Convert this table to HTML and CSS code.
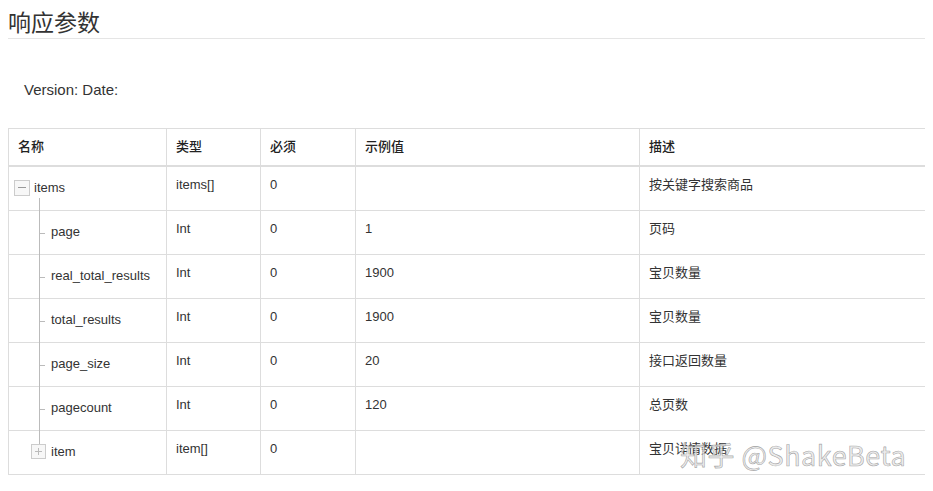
FILE: index.html
```html
<!DOCTYPE html>
<html lang="zh-CN">
<head>
<meta charset="utf-8">
<title>响应参数</title>
<link rel="stylesheet" href="styles.css">
</head>
<body>
<h2 class="title">响应参数</h2>
<p class="version">Version: Date:</p>
<table class="params">
  <colgroup>
    <col class="c-name"><col class="c-type"><col class="c-req"><col class="c-ex"><col class="c-desc">
  </colgroup>
  <thead>
    <tr><th>名称</th><th>类型</th><th>必须</th><th>示例值</th><th>描述</th></tr>
  </thead>
  <tbody>
    <tr>
      <td class="name root"><span class="toggle minus"></span>items</td>
      <td>items[]</td><td>0</td><td></td><td>按关键字搜索商品</td>
    </tr>
    <tr><td class="name child">page</td><td>Int</td><td>0</td><td>1</td><td>页码</td></tr>
    <tr><td class="name child">real_total_results</td><td>Int</td><td>0</td><td>1900</td><td>宝贝数量</td></tr>
    <tr><td class="name child">total_results</td><td>Int</td><td>0</td><td>1900</td><td>宝贝数量</td></tr>
    <tr><td class="name child">page_size</td><td>Int</td><td>0</td><td>20</td><td>接口返回数量</td></tr>
    <tr><td class="name child">pagecount</td><td>Int</td><td>0</td><td>120</td><td>总页数</td></tr>
    <tr>
      <td class="name child last"><span class="toggle plus"></span>item</td>
      <td>item[]</td><td>0</td><td></td><td>宝贝详情数据</td>
    </tr>
  </tbody>
</table>
<div class="watermark">知乎 @ShakeBeta</div>
</body>
</html>
```
FILE: styles.css
```css
html, body {
  background: #fff;
}
body {
  margin: 8px;
  font-family: "Liberation Sans", Arial, "Noto Sans CJK SC", sans-serif;
  color: #333;
  position: relative;
}
.title {
  margin: 0;
  font-size: 23px;
  font-weight: normal;
  line-height: 27px;
  padding-bottom: 3px;
  border-bottom: 1px solid #e5e5e5;
  color: #333;
  font-family: "Noto Sans CJK SC", sans-serif;
}
.version {
  margin: 41px 0 28px;
  padding-left: 16px;
  font-size: 15px;
  line-height: 20px;
  color: #333;
}
.params {
  width: 100%;
  table-layout: fixed;
  border-collapse: collapse;
  border: 1px solid #ddd;
  font-size: 13px;
  line-height: 20px;
}
.c-name { width: 158px; }
.c-type { width: 94px; }
.c-req { width: 95px; }
.c-ex { width: 284px; }
.c-desc { width: 286px; }
.params th, .params td {
  border: 1px solid #ddd;
  padding: 8px 9px;
  text-align: left;
  vertical-align: top;
  font-family: "Liberation Sans", Arial, "Noto Sans CJK SC", sans-serif;
}
.params th {
  height: 20px;
  padding: 8px 9px 8px;
  font-weight: 500;
  color: #222;
  vertical-align: middle;
  border-bottom: 2px solid #ddd;
}
.params tbody tr {
  height: 44px;
}
.params td {
  padding-top: 8px;
  color: #333;
}
.params td.name {
  position: relative;
  vertical-align: middle;
  padding-top: 11px;
  padding-bottom: 11px;
}
.params td.root {
  padding-left: 5px;
}
.params td.child {
  padding-left: 42px;
}
.params td.child.last {
  padding-left: 22px;
}
.toggle {
  display: inline-block;
  width: 13px;
  height: 13px;
  border: 1px solid #ccc;
  background: #f7f7f7;
  vertical-align: -3px;
  margin-right: 4px;
  position: relative;
}
.toggle.minus {
  width: 14px;
  height: 14px;
  vertical-align: -4px;
}
.toggle::before {
  content: "";
  position: absolute;
  left: 3px;
  right: 3px;
  top: 6px;
  height: 1px;
  background: #999;
}
.toggle.plus::after {
  content: "";
  position: absolute;
  top: 3px;
  bottom: 3px;
  left: 6px;
  width: 1px;
  background: #bbb;
}
.toggle.plus::before {
  background: #bbb;
}
.child.last .toggle {
  margin-right: 5px;
}
/* tree lines */
.root::after {
  content: "";
  position: absolute;
  left: 30px;
  top: 31px;
  bottom: -1px;
  width: 1px;
  background: #bbb;
}
.child::before {
  content: "";
  position: absolute;
  left: 30px;
  top: 0;
  bottom: -1px;
  width: 1px;
  background: #bbb;
}
.child::after {
  content: "";
  position: absolute;
  left: 31px;
  top: 22px;
  width: 5px;
  height: 1px;
  background: #bbb;
}
.child.last::before {
  bottom: auto;
  height: 14px;
}
.child.last::after {
  display: none;
}
.watermark {
  position: absolute;
  left: 672px;
  top: 427px;
  font-family: "Noto Sans CJK SC", "DejaVu Sans", sans-serif;
  font-size: 27px;
  letter-spacing: 0.5px;
  color: rgba(230, 230, 230, 0.8);
  -webkit-text-stroke: 0.6px rgba(110, 110, 110, 0.6);
  white-space: nowrap;
  pointer-events: none;
}
```
